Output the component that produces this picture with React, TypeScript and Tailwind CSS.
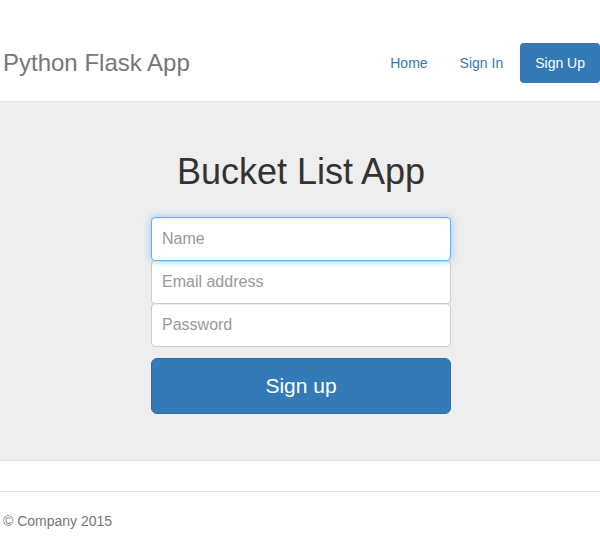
export default function App() {
  return (
    <div className="min-h-[550px] bg-white font-['Liberation_Sans',Arial,sans-serif] text-[14px] text-[#333]">
      {/* header */}
      <div className="flex items-center justify-between border-b border-[#e5e5e5] pl-[3px] pt-[43px] pb-[18px]">
        <h3 className="m-0 text-[24px] leading-[40px] font-normal text-[#777]">Python Flask App</h3>
        <ul className="flex gap-[2px]">
          <li>
            <a href="#" className="block rounded-[4px] px-[15px] py-[10px] leading-[20px] text-[#337ab7]">
              Home
            </a>
          </li>
          <li>
            <a href="#" className="block rounded-[4px] px-[15px] py-[10px] leading-[20px] text-[#337ab7]">
              Sign In
            </a>
          </li>
          <li>
            <a href="#" className="block rounded-[4px] bg-[#337ab7] px-[15px] py-[10px] leading-[20px] text-white">
              Sign Up
            </a>
          </li>
        </ul>
      </div>

      {/* jumbotron */}
      <div className="border-b border-[#e5e5e5] bg-[#eee] pl-[2px] pt-[50px] pb-[31px] text-center">
        <h1 className="m-0 text-[36px] leading-[40px] font-normal text-[#333]">Bucket List App</h1>
        <form className="mx-auto mt-[10px] w-[330px] p-[15px]">
          <input
            type="text"
            placeholder="Name"
            className="relative z-10 -mb-px block h-[44px] w-full rounded-[4px] border border-[#66afe9] bg-white px-[10px] text-[16px] outline-none placeholder:text-[#999] shadow-[inset_0_1px_1px_rgba(0,0,0,0.075),0_0_8px_rgba(102,175,233,0.6)]"
          />
          <input
            type="email"
            placeholder="Email address"
            className="-mb-px block h-[44px] w-full rounded-[4px] border border-[#ccc] bg-white px-[10px] text-[16px] outline-none placeholder:text-[#999] shadow-[inset_0_1px_1px_rgba(0,0,0,0.075)]"
          />
          <input
            type="password"
            placeholder="Password"
            className="mb-[11px] block h-[44px] w-full rounded-[4px] border border-[#ccc] bg-white px-[10px] text-[16px] outline-none placeholder:text-[#999] shadow-[inset_0_1px_1px_rgba(0,0,0,0.075)]"
          />
          <button
            type="button"
            className="block h-[56px] w-full rounded-[6px] border border-[#2e6da4] bg-[#337ab7] text-[21px] text-white"
          >
            Sign up
          </button>
        </form>
      </div>

      {/* footer */}
      <footer className="mt-[30px] border-t border-[#e5e5e5] pt-[19px] pl-[3px] text-[#777]">
        <p className="leading-[20px]">© Company 2015</p>
      </footer>
    </div>
  )
}
